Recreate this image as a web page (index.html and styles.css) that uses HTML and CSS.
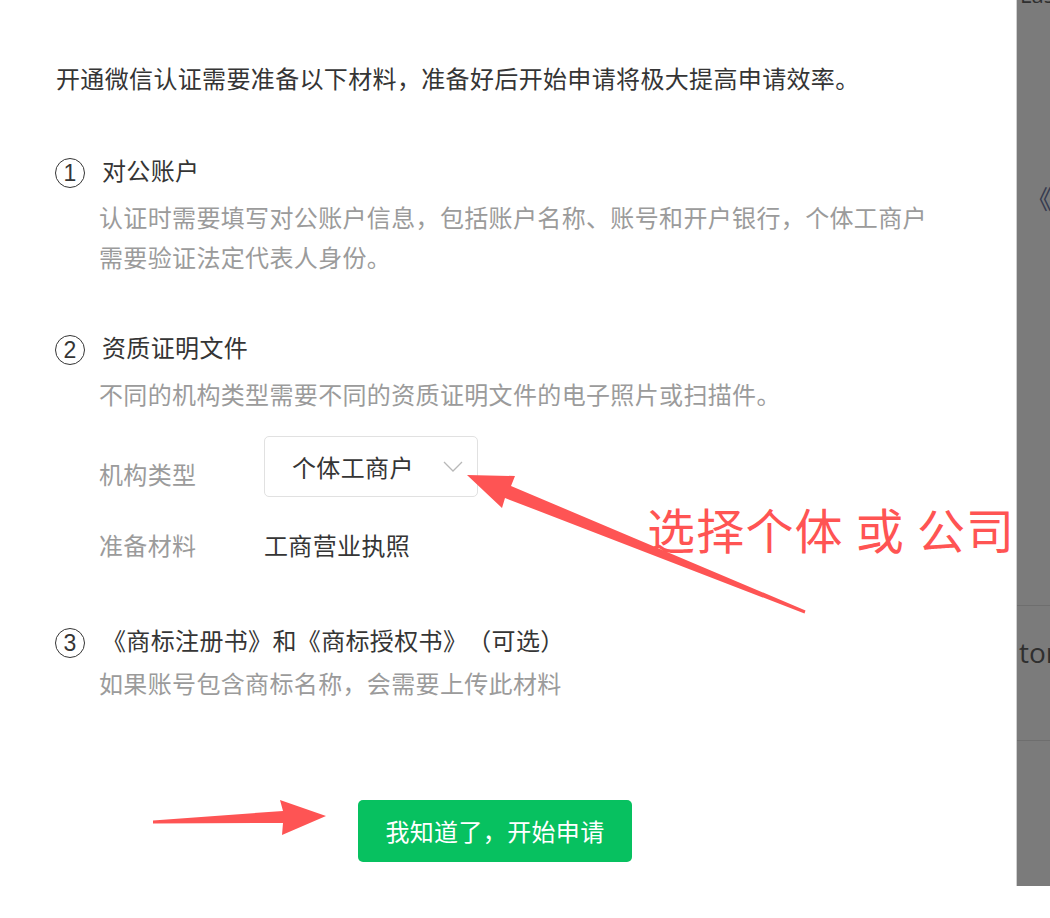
FILE: index.html
```html
<!DOCTYPE html>
<html>
  <head>
    <meta charset="UTF-8">
    <title>微信认证</title>
    <link rel="stylesheet" href="styles.css">
  </head>
  <body>
    <div class="page">
      <div class="main">
        <p class="intro">开通微信认证需要准备以下材料，准备好后开始申请将极大提高申请效率。</p>

        <div class="item">
          <div class="item-head"><span class="num">1</span><span class="item-title">对公账户</span></div>
          <p class="item-desc">认证时需要填写对公账户信息，包括账户名称、账号和开户银行，个体工商户需要验证法定代表人身份。</p>
        </div>

        <div class="item">
          <div class="item-head"><span class="num">2</span><span class="item-title">资质证明文件</span></div>
          <p class="item-desc">不同的机构类型需要不同的资质证明文件的电子照片或扫描件。</p>
          <div class="field">
            <span class="field-label field-label-select">机构类型</span>
            <div class="select">
              <span>个体工商户</span>
              <svg width="20" height="11" viewBox="0 0 20 11"><path d="M1 1l9 9 9-9" fill="none" stroke="#b8b8b8" stroke-width="1.3"/></svg>
            </div>
          </div>
          <div class="field field-plain">
            <span class="field-label">准备材料</span>
            <span class="field-value">工商营业执照</span>
          </div>
        </div>

        <div class="item item-last">
          <div class="item-head"><span class="num">3</span><span class="item-title">《商标注册书》和《商标授权书》（可选）</span></div>
          <p class="item-desc">如果账号包含商标名称，会需要上传此材料</p>
        </div>

        <div class="actions">
          <button class="btn-primary">我知道了，开始申请</button>
        </div>
      </div>

      <div class="side">
        <div class="side-cut">Last</div>
        <div class="side-back">《</div>
        <div class="side-row">tor</div>
      </div>

      <!-- annotations drawn over the page -->
      <div class="marks">
        <svg width="1050" height="918" viewBox="0 0 1050 918">
          <polygon points="467,475 515,476 511,486 805.5,610.5 804.5,613.5 505,498 502,508" fill="#fe5454"/>
          <polygon points="326,816 280,800 283,811 153,820.5 153,823.5 283,823 282,835" fill="#fe5454"/>
        </svg>
        <div class="note">选择个体 或 公司</div>
      </div>
    </div>
  </body>
</html>
```

FILE: styles.css
```css
body {
  margin: 0;
  background: #fff;
  font-family: "Noto Sans CJK SC", "Noto Sans", sans-serif;
}
.page {
  position: relative;
  width: 1050px;
  display: flex;
  align-items: flex-start;
}
.main {
  width: 1016px;
  box-sizing: border-box;
  padding: 58px 0 0 56px;
  color: #353535;
  font-size: 24px;
  line-height: 40px;
  letter-spacing: 0.35px;
  text-spacing-trim: space-all;
}
.intro {
  margin: 0;
}
.item {
  margin-top: 50px;
}
.intro + .item {
  margin-top: 52px;
}
.item-head {
  display: flex;
  align-items: flex-start;
}
.num {
  width: 30px;
  height: 30px;
  box-sizing: border-box;
  border: 1.5px solid #353535;
  border-radius: 50%;
  display: flex;
  align-items: center;
  justify-content: center;
  font-family: "Liberation Sans", sans-serif;
  font-size: 23px;
  line-height: 1;
  letter-spacing: 0;
  margin: 8px 17px 0 -1px;
  flex-shrink: 0;
}
.item-desc {
  margin: 7px 0 0;
  padding-left: 43px;
  max-width: 845px;
  color: #9b9b9b;
}
.field {
  display: flex;
  align-items: flex-start;
  padding-left: 43px;
  margin-top: 22px;
}
.field-plain {
  margin-top: 28px;
}
.field-label {
  width: 165px;
  flex-shrink: 0;
  color: #9b9b9b;
}
.field-label-select {
  margin-top: 18px;
}
.select {
  width: 214px;
  height: 61px;
  box-sizing: border-box;
  border: 1px solid #e1e1e1;
  border-radius: 5px;
  display: flex;
  align-items: center;
  justify-content: space-between;
  padding: 0 14px 0 27px;
}
.select svg {
  display: block;
}
.item-last {
  margin-top: 55px;
}
.item-last .item-desc {
  margin-top: 3px;
}
.actions {
  margin-top: 97px;
  padding-left: 302px;
}
.btn-primary {
  width: 274px;
  height: 62px;
  border: none;
  border-radius: 5px;
  background: #07c160;
  color: #fff;
  font-family: "Noto Sans CJK SC", "Noto Sans", sans-serif;
  font-size: 24px;
  line-height: 40px;
  letter-spacing: 0.35px;
  padding: 0;
}
.side {
  width: 34px;
  height: 886px;
  box-sizing: border-box;
  border-left: 1px solid #d0d0d0;
  background: #7b7b7b;
  overflow: hidden;
  color: #2f2f2f;
  white-space: nowrap;
}
.side-cut {
  font-family: "Open Sans", sans-serif;
  font-size: 22px;
  line-height: 22px;
  height: 22px;
  margin-top: -17px;
  padding-left: 3px;
}
.side-back {
  margin-top: 173px;
  padding-left: 9px;
  font-size: 26px;
  line-height: 40px;
  color: #363b50;
}
.side-row {
  margin-top: 387px;
  height: 136px;
  box-sizing: border-box;
  border-top: 1px solid #6e6e6e;
  border-bottom: 1px solid #6e6e6e;
  padding: 26px 0 0 2px;
  font-family: "Open Sans", sans-serif;
  font-size: 28px;
  line-height: 40px;
}
.marks {
  position: absolute;
  left: 0;
  top: 0;
  width: 1050px;
  height: 918px;
  pointer-events: none;
}
.marks svg {
  display: block;
}
.note {
  position: absolute;
  left: 647px;
  top: 504px;
  font-size: 48px;
  line-height: 48px;
  letter-spacing: 1.2px;
  color: #ff5453;
  white-space: nowrap;
}
```
